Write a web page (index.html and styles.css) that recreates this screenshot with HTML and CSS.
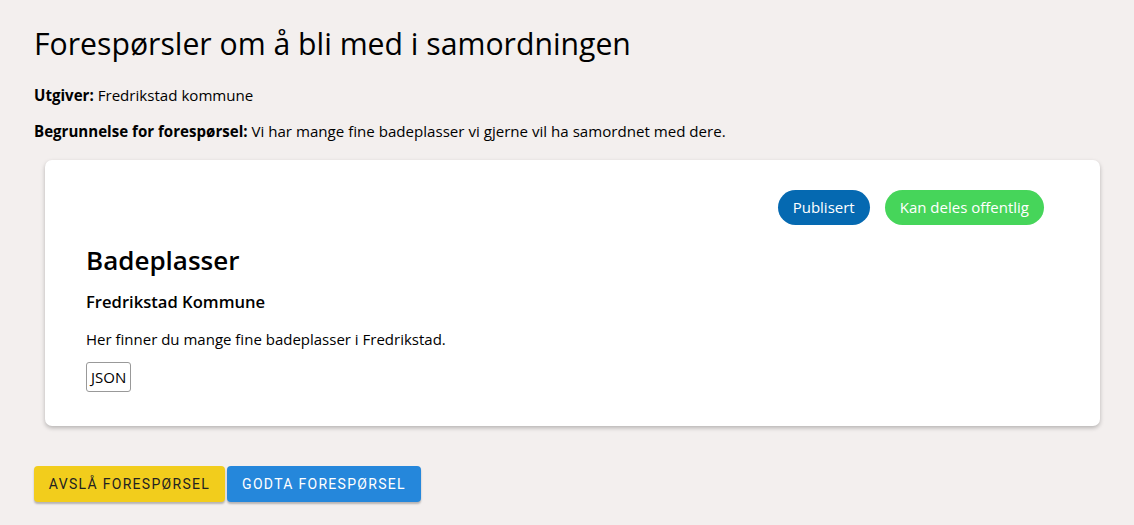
FILE: index.html
```html
<!DOCTYPE html>
<html lang="no">
<head>
<meta charset="utf-8">
<title>Forespørsler</title>
<link rel="stylesheet" href="styles.css">
</head>
<body>
<main class="page">
  <h1 class="title">Forespørsler om å bli med i samordningen</h1>
  <p class="meta"><strong>Utgiver:</strong> Fredrikstad kommune</p>
  <p class="meta"><strong>Begrunnelse for forespørsel:</strong> Vi har mange fine badeplasser vi gjerne vil ha samordnet med dere.</p>
  <section class="card">
    <div class="badges">
      <span class="badge badge-blue">Publisert</span>
      <span class="badge badge-green">Kan deles offentlig</span>
    </div>
    <h2 class="card-title">Badeplasser</h2>
    <h3 class="card-org">Fredrikstad Kommune</h3>
    <p class="card-desc">Her finner du mange fine badeplasser i Fredrikstad.</p>
    <span class="format">JSON</span>
  </section>
  <div class="actions">
    <button class="btn btn-yellow">Avslå forespørsel</button>
    <button class="btn btn-blue">Godta forespørsel</button>
  </div>
</main>
</body>
</html>
```
FILE: styles.css
```css
html, body {
  margin: 0;
  padding: 0;
  background: #f3efee;
}
body {
  font-family: "Open Sans", "Noto Sans", sans-serif;
  color: #000;
}
.page {
  padding: 25px 34px 20px 34px;
}
.title {
  margin: 0 0 22px 0;
  font-size: 30.2px;
  font-weight: 400;
  line-height: 38px;
}
.meta {
  margin: 0 0 16px 0;
  font-size: 15.1px;
  line-height: 20px;
}
.meta strong {
  font-weight: 700;
}
.card {
  margin: 19px 0 0 11px;
  width: 1055px;
  box-sizing: border-box;
  background: #fff;
  border-radius: 7px;
  box-shadow: 0 2px 4px rgba(0,0,0,0.25);
  padding: 30px 56px 34px 41px;
}
.badges {
  display: flex;
  justify-content: flex-end;
  gap: 15px;
}
.badge {
  display: inline-block;
  height: 35px;
  line-height: 35px;
  padding: 0 15px;
  border-radius: 18px;
  color: #fff;
  font-size: 15px;
}
.badge-blue { background: #0569b1; }
.badge-green { background: #46d55a; }
.card-title {
  margin: 18px 0 0 0;
  font-size: 26px;
  font-weight: 600;
  line-height: 34px;
}
.card-org {
  margin: 13px 0 0 0;
  font-size: 16.6px;
  font-weight: 600;
  line-height: 24px;
}
.card-desc {
  margin: 15px 0 0 0;
  font-size: 15px;
  line-height: 20px;
}
.format {
  display: inline-block;
  margin-top: 13px;
  border: 1px solid #999;
  border-radius: 3px;
  padding: 0 4px;
  height: 28px;
  line-height: 28px;
  font-size: 15px;
}
.actions {
  margin-top: 40px;
  display: flex;
  gap: 2px;
}
.btn {
  font-family: Roboto, sans-serif;
  text-transform: uppercase;
  font-size: 14px;
  letter-spacing: 1.3px;
  font-weight: 400;
  height: 36px;
  padding: 0 14px;
  border: none;
  border-radius: 4px;
  box-shadow: 0 2px 2px rgba(0,0,0,0.25);
}
.btn-yellow { background: #f2cd1c; color: #222; width: 191px; }
.btn-blue { background: #2587db; color: #fff; width: 194px; }
```
